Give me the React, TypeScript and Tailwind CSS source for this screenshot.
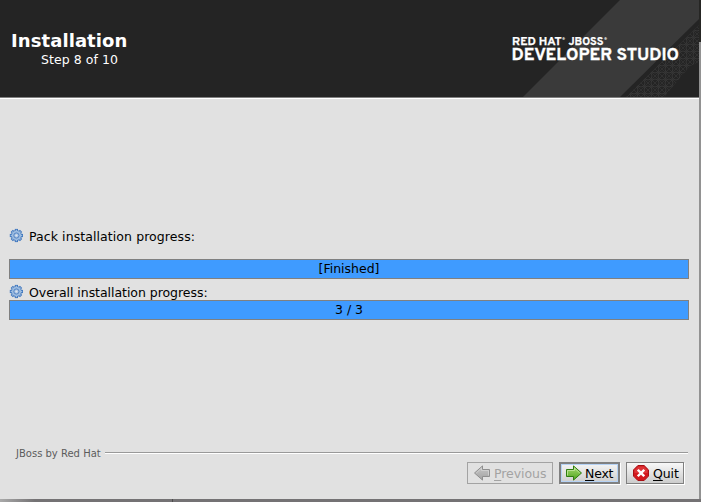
import React from 'react';

function Gear() {
  return (
    <svg width="14" height="14" viewBox="-0.4 0.5 14 14" className="shrink-0 overflow-visible">
      <g fill="#3f76bd">
        {[0, 45, 90, 135].map((a) => (
          <rect key={a} x="5.4" y="0.4" width="3.2" height="13.2" transform={`rotate(${a} 7 7)`} />
        ))}
        <circle cx="7" cy="7" r="5.4" />
      </g>
      <g fill="#9dbce0">
        {[0, 45, 90, 135].map((a) => (
          <rect key={a} x="6.3" y="1.2" width="1.4" height="11.6" transform={`rotate(${a} 7 7)`} />
        ))}
        <circle cx="7" cy="7" r="4.7" />
      </g>
      <circle cx="7" cy="7" r="2.6" fill="#a9c3e3" stroke="#5585c4" strokeWidth="1" />
      <circle cx="7" cy="7" r="1.1" fill="#dde5ee" />
    </svg>
  );
}

function Brand() {
  return (
    <svg width="199" height="97" viewBox="500 0 199 97" className="block">
      <defs>
        <pattern id="lattice" width="14" height="14" patternUnits="userSpaceOnUse" patternTransform="translate(627 97)">
          <g fill="none" stroke="#393939" strokeWidth="0.9">
            <circle cx="7" cy="7" r="4" />
            <circle cx="0" cy="0" r="4" />
            <circle cx="14" cy="0" r="4" />
            <circle cx="0" cy="14" r="4" />
            <circle cx="14" cy="14" r="4" />
            <path d="M0 7L7 0L14 7L7 14ZM0 0L14 14M14 0L0 14" strokeWidth="0.6" />
          </g>
        </pattern>
      </defs>
      <path d="M620 0H699V19L620 97H523Z" fill="#3a3a3a" />
      <path d="M626 97L699 25V62L690 66L664 97Z" fill="url(#lattice)" />
      <g fill="#fff" stroke="#fff" fontFamily="Overpass, Roboto, sans-serif" fontWeight="700">
        <g strokeWidth="0.25">
          <text x="512" y="44.6" fontSize="10.9" textLength="49.5" lengthAdjust="spacingAndGlyphs">RED HAT</text>
          <text x="568.5" y="44.6" fontSize="10.9" textLength="35" lengthAdjust="spacingAndGlyphs">JBOSS</text>
        </g>
        <g stroke="none">
          <text x="562" y="39.6" fontSize="3.6">®</text>
          <text x="604" y="39.6" fontSize="3.6">®</text>
        </g>
        <text x="511.5" y="60" fontSize="16.6" strokeWidth="0.3" textLength="167.5" lengthAdjust="spacingAndGlyphs">DEVELOPER STUDIO</text>
      </g>
    </svg>
  );
}

function Arrow({ muted = false }: { muted?: boolean }) {
  const id = muted ? 'arrowMuted' : 'arrowGreen';
  return (
    <svg width="16" height="16" viewBox="0 0 16 16" className="shrink-0">
      <defs>
        <linearGradient id={id} x1="0" y1="0" x2="0" y2="1">
          <stop offset="0" stopColor={muted ? '#c8c8c8' : '#a9db74'} />
          <stop offset="1" stopColor={muted ? '#a2a2a2' : '#4fa51c'} />
        </linearGradient>
      </defs>
      <g transform={muted ? 'translate(16 0) scale(-1 1)' : undefined}>
        <path d="M0.5 4.5H7.5V0.9L15.5 8L7.5 15.1V11.5H0.5Z" fill={`url(#${id})`} stroke={muted ? '#8e8e8e' : '#2f7c10'} strokeLinejoin="round" />
        <path d="M1.5 10.5V5.5H8.5V3.2L13.8 8" fill="none" stroke={muted ? '#d4d4d4' : '#c6e8a2'} strokeWidth="0.8" />
      </g>
    </svg>
  );
}

function Stop() {
  return (
    <svg width="16" height="16" viewBox="0 0 16 16" className="shrink-0">
      <path d="M4.9 0.5H11.1L15.5 4.9V11.1L11.1 15.5H4.9L0.5 11.1V4.9Z" fill="#d3181d" stroke="#a80f14" />
      <path d="M5.2 1.5H10.8L14.5 5.2V8H1.5V5.2Z" fill="#dd3437" />
      <path d="M5.6 5.6L10.4 10.4M10.4 5.6L5.6 10.4" stroke="#fff" strokeWidth="2.4" strokeLinecap="square" />
    </svg>
  );
}

function Progress({ label }: { label: string }) {
  return (
    <div className="flex h-5 w-[680px] items-center justify-center border border-[#808080] bg-[#3f9bff] text-[12.5px] leading-[18px]">
      {label}
    </div>
  );
}

export default function App() {
  return (
    <div className="flex h-[502px] w-[701px] flex-col overflow-hidden bg-[#747274] text-black [font-family:'DejaVu_Sans',sans-serif]">
      <div className="flex h-[499px]">
        <main className="flex w-[699px] flex-col bg-[#e1e1e1]">
          <header className="flex h-[99px] justify-between border-b border-white bg-[#242424]">
            <div className="flex h-[98px] w-full justify-between border-b border-[#808080]">
              <div className="pt-[30px] pl-[11px] text-white">
                <h1 className="text-[18px] leading-[22px] font-bold tracking-[0.08px]">Installation</h1>
                <p className="pl-[30px] text-[12.5px] leading-[15px] tracking-[0.05px]">Step 8 of 10</p>
              </div>
              <Brand />
            </div>
          </header>
          <section className="h-[353px] pt-[130px] pl-[9px]">
            <div className="flex h-[30px]">
              <Gear />
              <span className="pl-[6px] text-[12.5px] leading-[16px] tracking-[0.08px]">Pack installation progress:</span>
            </div>
            <Progress label="[Finished]" />
            <div className="flex h-[21px] pt-[6px]">
              <Gear />
              <span className="pl-[6px] text-[12.5px] leading-[16px] tracking-[-0.04px]">Overall installation progress:</span>
            </div>
            <Progress label="3 / 3" />
          </section>
          <footer className="flex flex-col">
            <div className="-mt-[5px] flex h-[15px] pl-[16px]">
              <span className="w-[89px] text-[10px] leading-[13px] whitespace-nowrap text-[#5c5c5c]">JBoss by Red Hat</span>
              <div className="mt-[5px] h-[2px] w-[583px] border-t border-[#999] bg-white" />
            </div>
            <div className="flex gap-[6px] pl-[467px]">
              <button disabled className="flex h-[22px] w-[86px] items-center border border-[#a3a3a3] pl-[6px] text-[12.5px] leading-[20px] tracking-[-0.05px] text-[#a3a3a3]">
                <Arrow muted />
                <span className="pt-px pl-[4px]"><u className="underline-offset-2">P</u>revious</span>
              </button>
              <button className="flex h-[22px] w-[61px] items-center border-2 border-[#808080] bg-linear-to-b from-[#f4f4f4] to-[#cfcfcf] pl-[5px] text-[12.5px] leading-[18px] tracking-[-0.2px] shadow-[1px_1px_0_#fff,inset_0_0_0_1px_#b5d2f5]">
                <Arrow />
                <span className="pt-px pl-[3px]"><u className="underline-offset-2">N</u>ext</span>
              </button>
              <button className="flex h-[22px] w-[58px] items-center border border-[#808080] bg-linear-to-b from-[#f8f8f8] to-[#cccccc] pl-[6px] text-[12.5px] leading-[20px] tracking-[-0.1px] shadow-[1px_1px_0_#fff]">
                <Stop />
                <span className="pt-px pl-[4px]"><u className="underline-offset-2">Q</u>uit</span>
              </button>
            </div>
          </footer>
        </main>
        <aside className="flex w-[2px] flex-col bg-[#929292]">
          <div className="h-[42px] bg-[#262624]" />
        </aside>
      </div>
      <div className="flex h-[3px] bg-linear-to-r from-[#aaa] via-[#747274] via-5% to-[#747274]">
        <div className="ml-[172px] w-px bg-[#4c4c4c]" />
      </div>
    </div>
  );
}
